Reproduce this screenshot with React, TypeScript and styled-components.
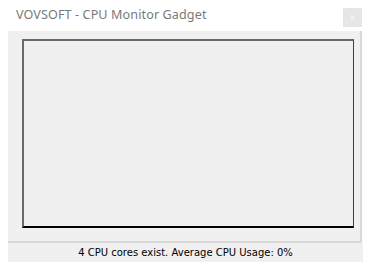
import React from "react";
import styled, { createGlobalStyle } from "styled-components";

const GlobalStyle = createGlobalStyle`
  html, body {
    margin: 0;
    padding: 0;
    background: #ffffff;
  }
`;

const Window = styled.div`
  width: 371px;
  height: 271px;
  background: #ffffff;
  display: flex;
  flex-direction: column;
  font-family: "DejaVu Sans", "Noto Sans", sans-serif;
`;

const TitleBar = styled.div`
  height: 31px;
  display: flex;
  align-items: flex-start;
  justify-content: space-between;
  padding: 0 9px 0 16px;
  box-sizing: border-box;
`;

const Title = styled.span`
  margin-top: 6px;
  font-size: 12.6px;
  color: #7a7a7a;
  font-family: "Noto Sans", "DejaVu Sans", sans-serif;
  letter-spacing: 0.1px;
`;

const CloseBox = styled.div`
  margin-top: 8px;
  width: 19px;
  height: 19px;
  background: #e6e6e6;
  color: #f8f8f8;
  font-size: 10px;
  display: flex;
  align-items: center;
  justify-content: center;
  font-family: "Liberation Sans", sans-serif;
`;

const Panel = styled.div`
  margin: 0 9px 0 8px;
  height: 212px;
  background: #f0f0f0;
  border-right: 2px solid #d9d9d9;
  border-bottom: 2px solid #d9d9d9;
  padding: 8px 6px 13px 14px;
  box-sizing: border-box;
  display: flex;
`;

const Chart = styled.div`
  flex: 1;
  background: #f0f0f0;
  border-top: 2px solid #696969;
  border-left: 2px solid #696969;
  border-right: 1px solid #404040;
  border-bottom: 2px solid #000000;
`;

const StatusBar = styled.div`
  margin: 0 8px;
  height: 19px;
  background: #f0f0f0;
  display: flex;
  align-items: center;
  justify-content: center;
  font-family: "DejaVu Sans", sans-serif;
  font-size: 10px;
  color: #000000;
`;

export default function App() {
  return (
    <>
      <GlobalStyle />
      <Window>
        <TitleBar>
          <Title>VOVSOFT - CPU Monitor Gadget</Title>
          <CloseBox>x</CloseBox>
        </TitleBar>
        <Panel>
          <Chart />
        </Panel>
        <StatusBar>4 CPU cores exist. Average CPU Usage: 0%</StatusBar>
      </Window>
    </>
  );
}
